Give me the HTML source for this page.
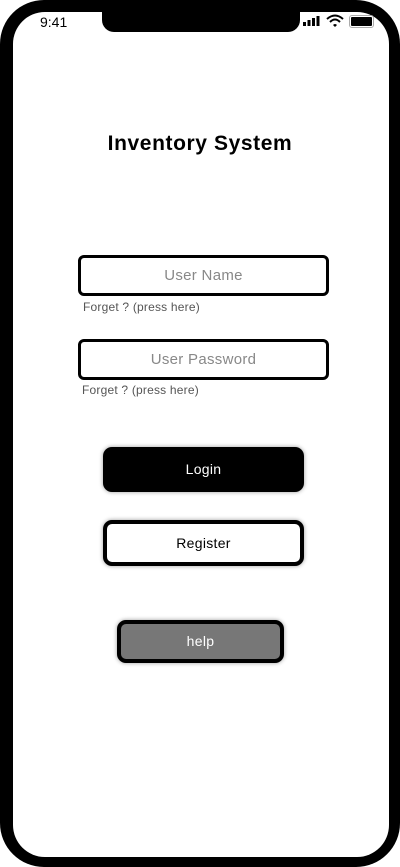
<!DOCTYPE html>
<html><head><style>
*{margin:0;padding:0;box-sizing:border-box}
body{width:400px;height:867px;background:#fff;font-family:"Liberation Sans",sans-serif;position:relative;overflow:hidden}
.frame{position:absolute;left:0;top:0;width:400px;height:867px;background:#000;border-radius:44px}
.screen{position:absolute;left:13px;top:12px;width:376px;height:845px;background:#fff;border-radius:32px}
.notch{position:absolute;left:102px;top:0;width:198px;height:32px;background:#000;border-radius:0 0 12px 12px}
.time{position:absolute;left:40px;top:14px;font-size:14px;color:#000}
.abs{position:absolute}
.input{position:absolute;left:78px;width:251px;height:41px;border:3px solid #000;border-radius:6px;text-align:center;line-height:35px;font-size:15px;color:#888;letter-spacing:.3px}
.forget{position:absolute;font-size:12px;color:#555;letter-spacing:.2px}
.btn{position:absolute;border-radius:9px;text-align:center;font-size:14px;box-shadow:0 0 4px rgba(0,0,0,.4);letter-spacing:.3px}
</style></head><body>
<div class="frame"></div>
<div class="screen"></div>
<div class="notch"></div>
<div class="time">9:41</div>
<svg class="abs" style="left:303px;top:15px" width="20" height="12"><rect x="0" y="7" width="3" height="4" fill="#000"/><rect x="4.5" y="5" width="3" height="6" fill="#000"/><rect x="9" y="3" width="3" height="8" fill="#000"/><rect x="13.5" y="1" width="3" height="10" fill="#000"/></svg>
<svg class="abs" style="left:326px;top:14px" width="18" height="14"><path d="M1 5 Q9 -2 17 5" stroke="#000" stroke-width="2" fill="none"/><path d="M4 8 Q9 3 14 8" stroke="#000" stroke-width="2" fill="none"/><path d="M7 11 L9 13 L11 11 Q9 9 7 11Z" fill="#000"/></svg>
<div class="abs" style="left:349px;top:15px;width:25px;height:13px;border:1.5px solid #aaa;border-radius:3px;padding:1px"><div style="width:100%;height:100%;background:#000;border-radius:1px"></div></div>
<div class="abs" style="left:0;width:400px;top:132px;text-align:center;font-size:21px;font-weight:bold;color:#000;letter-spacing:.6px">Inventory System</div>
<div class="input" style="top:255px">User Name</div>
<div class="forget" style="left:83px;top:300px">Forget ? (press here)</div>
<div class="input" style="top:339px">User Password</div>
<div class="forget" style="left:82px;top:383px">Forget ? (press here)</div>
<div class="btn" style="left:103px;top:447px;width:201px;height:45px;background:#000;color:#fff;line-height:45px">Login</div>
<div class="btn" style="left:103px;top:520px;width:201px;height:46px;background:#fff;border:4px solid #000;line-height:38px;color:#000">Register</div>
<div class="btn" style="left:117px;top:620px;width:167px;height:43px;background:#777;border:4px solid #000;line-height:35px;color:#fff">help</div>
</body></html>
